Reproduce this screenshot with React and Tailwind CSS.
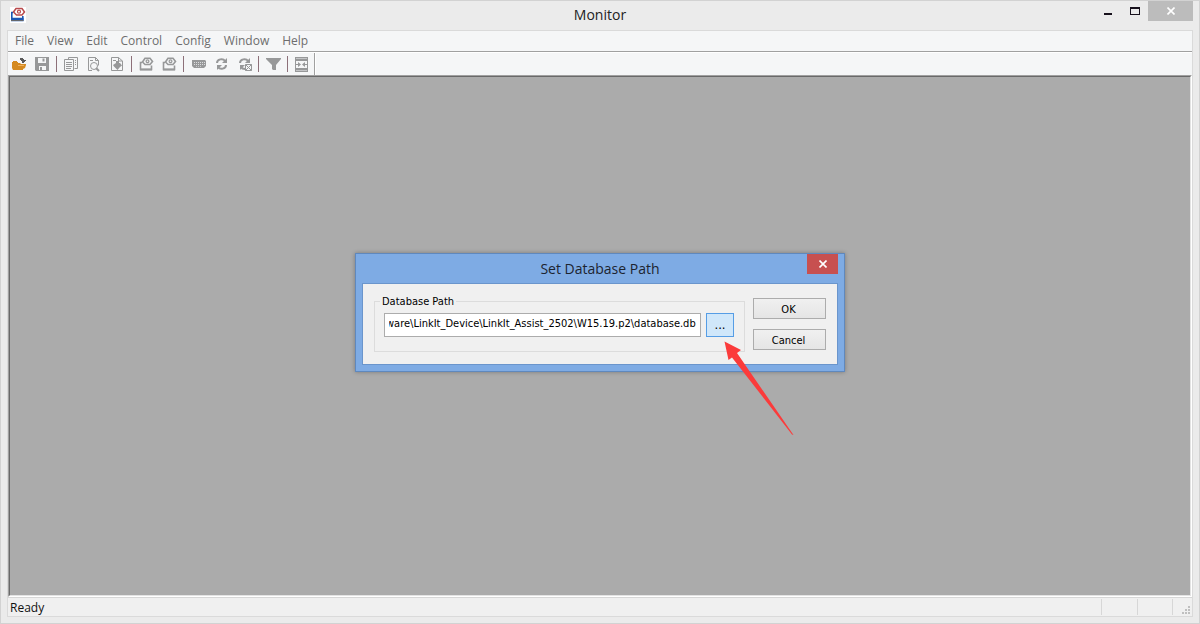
import { useEffect, useRef } from "react";

const menus = ["File", "View", "Edit", "Control", "Config", "Window", "Help"];

function Glyph({ children, fill = "none" }) {
  return (
    <svg viewBox="0 0 16 16" className="size-4 shrink-0" fill={fill} stroke="#979899" aria-hidden="true">
      {children}
    </svg>
  );
}

const OpenIcon = () => (
  <Glyph>
    <path d="M0 5h1v-1h4v1h1v1h2l1 1h5v1l-1 3-2 1v1H1l-1-2z" fill="#d58a20" stroke="none" />
    <path d="M6 8.500h6" stroke="#eeb060" />
    <path d="M8 1h3V2h1v1h2v1h-1v1h-1v1h-2V4H9V3H8z" fill="#5a5a5a" stroke="none" />
  </Glyph>
);

const SaveIcon = () => (
  <Glyph>
    <path fillRule="evenodd" d="M0 0h14v14H1l-1-1zM3 1v5h8V1zM4 9v4h1v-3h2v3h4V9z" fill="#979899" stroke="none" />
    <path d="M8.500 1.500v3" strokeWidth="2" />
  </Glyph>
);

const CopyIcon = () => (
  <Glyph>
    <path d="M4.500 2.500v-2h9v11h-3M0.500 2.500h9v11h-9zM2 5.500h6M2 7.500h6M2 9.500h6M2 11.500h5M6 0.500h5M11 3.500h1M11 5.500h1M11 7.500h1" />
  </Glyph>
);

const FindIcon = () => (
  <Glyph>
    <path d="M5 13.500H1.500V0.500h7l3 3v5M8.500 0.500v3h3M3 3.500h3" />
    <circle cx="7" cy="9" r="3.500" />
    <path d="M9 11l3 3" strokeWidth="2" />
  </Glyph>
);

const MarkIcon = () => (
  <Glyph>
    <path d="M1.500 0.500h7l4 3.500v9.500h-11zM8.500 0.500v3.500h4M3 3.500h3" />
    <path d="M6 4h3v2h1l2 2.500-2 1.500-2.500 3L4 9.500 3 8l3-2z" fill="#979899" stroke="none" />
  </Glyph>
);

const EyeIcon = () => (
  <Glyph>
    <path d="M3 5.500H1.500v7h11V8.500" strokeWidth="1.600" />
    <path d="M1 12.500h12" strokeWidth="2" />
    <path d="M3.500 5L6 1.200h5L13.500 4.500 11 7.500H6z" strokeWidth="1.600" />
    <circle cx="8.500" cy="4.300" r="1.400" strokeWidth="1.200" />
  </Glyph>
);

const KeyboardIcon = () => (
  <Glyph>
    <path d="M1 3h13l1 1v5l-2 2H3L1 9z" fill="#979899" stroke="none" />
    <path d="M3 5.500h11M3 7.500h11" stroke="#dcdddf" strokeDasharray="1 1" />
    <path d="M5 9.500h6" stroke="#c5c6c8" strokeDasharray="1 1" />
  </Glyph>
);

const CycleIcon = ({ crossed }) => (
  <Glyph>
    <path d="M3 6c0-4 6-5 8-2" strokeWidth="2" />
    <path d="M13 1v5H8z" fill="#979899" stroke="none" />
    <path d="M3 13V8h5z" fill="#979899" stroke="none" />
    {crossed ? (
      <>
        <path d="M4 10c1 2 2 2 4 2" strokeWidth="2" />
        <path d="M8.500 7.500h6v6h-6zM8.500 7.500l6 6M14.500 7.500l-6 6" />
      </>
    ) : (
      <path d="M4 10c2 3 8 2 8-2" strokeWidth="2" />
    )}
  </Glyph>
);

const FilterIcon = () => (
  <Glyph>
    <path d="M0 1h15v1l-5 6v5H7l-1-1V8L0 2z" fill="#979899" stroke="none" />
  </Glyph>
);

const SplitIcon = () => (
  <Glyph>
    <path fillRule="evenodd" d="M0 0h13v15H0zM1 4v7h11V4z" fill="#979899" stroke="none" />
    <path d="M1 1.500h11M1 13.500h11" stroke="#c4c5c7" />
    <path d="M1 7.500h2M10 7.500h2" />
    <path d="M3 5v5l3-2.500zM10 5v5L7 7.500z" fill="#979899" stroke="none" />
  </Glyph>
);

const toolGroups = [
  [["Open", <OpenIcon />], ["Save", <SaveIcon />]],
  [["Copy", <CopyIcon />], ["Find", <FindIcon />], ["Mark", <MarkIcon />]],
  [["Watch", <EyeIcon />], ["Watch all", <EyeIcon />]],
  [["Port", <KeyboardIcon />], ["Reconnect", <CycleIcon />], ["Disconnect", <CycleIcon crossed />]],
  [["Filter", <FilterIcon />]],
  [["Fit columns", <SplitIcon />]],
];

function AppIcon() {
  return (
    <svg viewBox="0 0 16 16" className="size-4 bg-white" fill="none" aria-hidden="true">
      <path d="M3 5.500H1.800v8h11V9" stroke="#1c57b5" strokeWidth="1.600" />
      <path d="M1 12h12.500" stroke="#1c57b5" strokeWidth="2.500" />
      <path d="M1 13.500h12.500" stroke="#66686c" />
      <path d="M3.500 5L6 1.500h6L14.500 5 12 8H6.500z" fill="#fff" stroke="#b94a4c" strokeWidth="1.500" />
      <circle cx="9" cy="4.700" r="1.500" stroke="#b94a4c" strokeWidth="1.200" />
    </svg>
  );
}

function TitleBar() {
  return (
    <header className="grid h-[29px] grid-cols-[1fr_auto_1fr] items-start">
      <div className="pt-1.5 pl-[3px]">
        <AppIcon />
      </div>
      <h1 className="pt-[3px] text-[14px] leading-[22px] text-[#222]">Monitor</h1>
      <div className="flex justify-end">
        <button aria-label="Minimize" className="flex h-5 w-[27px] items-center justify-center">
          <svg viewBox="0 0 10 10" className="size-2.5" aria-hidden="true">
            <path d="M1 7h8v2H1z" fill="#17111c" />
          </svg>
        </button>
        <button aria-label="Maximize" className="flex h-5 w-[27px] items-center justify-center">
          <svg viewBox="0 0 10 8" className="h-2 w-2.5" aria-hidden="true">
            <path fillRule="evenodd" d="M0 0h10v8H0zM1 2v5h8V2z" fill="#17111c" />
          </svg>
        </button>
        <button aria-label="Close" className="flex h-5 w-[45px] items-center justify-center bg-[#bcbcbc]">
          <svg viewBox="0 0 8 8" className="size-2" aria-hidden="true">
            <path d="M0.500 0.500l7 7M7.500 0.500l-7 7" stroke="#fff" strokeWidth="1.600" />
          </svg>
        </button>
      </div>
    </header>
  );
}

function Toolbar() {
  return (
    <div role="toolbar" className="flex h-[23px] items-stretch border-t border-white bg-[#f5f6f7]">
      {toolGroups.map((group, i) => (
        <div key={i} className="flex items-stretch">
          {i > 0 && (
            <span className="w-1.5 py-[3px] pl-0.5">
              <span className="block h-full w-px bg-[#8d7079]" />
            </span>
          )}
          {group.map(([label, icon]) => (
            <button key={label} aria-label={label} className="flex w-[23px] pt-1 pl-1">
              {icon}
            </button>
          ))}
        </div>
      ))}
      <span className="w-0.5 border-r border-l border-r-white border-l-[#a0a0a0]" />
    </div>
  );
}

function StatusBar() {
  return (
    <footer className="flex h-[19px] items-stretch border-t border-[#d7d7d7] bg-[#f0f0f0]">
      <span className="grow pl-0.5 text-xs leading-5 text-[#111]">Ready</span>
      <span className="my-px w-9 border-l border-[#d7d7d7]" />
      <span className="my-px w-[35px] border-l border-[#d7d7d7]" />
      <span className="my-px flex w-5 items-end justify-end border-l border-[#d7d7d7] pr-0.5">
        <svg viewBox="0 0 8 8" className="mb-px size-2" fill="#bfbfbf" aria-hidden="true">
          <path d="M6 0h2v2H6zM3 3h2v2H3zM6 3h2v2H6zM0 6h2v2H0zM3 6h2v2H3zM6 6h2v2H6z" />
        </svg>
      </span>
    </footer>
  );
}

const pushButton =
  "h-[21px] border border-[#acacac] bg-linear-to-b from-[#f0f0f0] to-[#e5e5e5] pt-0.5 pr-0.5 text-[11px] leading-none text-black";

function DatabaseDialog() {
  const pathRef = useRef(null);

  useEffect(() => {
    pathRef.current.scrollLeft = pathRef.current.scrollWidth;
  }, []);

  return (
    <section
      role="dialog"
      aria-labelledby="dialog-title"
      className="relative w-[490px] border border-[#5f88bd] bg-[#7eabe4] px-1.5 pb-1.5 shadow-[0_0_4px_rgba(0,0,0,0.3)]"
    >
      <div className="grid h-[29px] grid-cols-[1fr_auto_1fr] items-start">
        <h2 id="dialog-title" className="col-start-2 pt-1 text-[14px] leading-[22px] text-[#1c2430]">
          Set Database Path
        </h2>
        <button aria-label="Close dialog" className="flex h-5 w-[31px] items-center justify-center justify-self-end bg-[#c75050]">
          <svg viewBox="0 0 8 8" className="size-2" aria-hidden="true">
            <path d="M0.500 0.500l7 7M7.500 0.500l-7 7" stroke="#fff" strokeWidth="1.600" />
          </svg>
        </button>
      </div>
      <form
        onSubmit={(e) => e.preventDefault()}
        className="flex items-start gap-2 border border-[#6a95cc] bg-[#f0f0f0] px-[11px] pt-2.5 pb-3 font-['DejaVu_Sans_Condensed','DejaVu_Sans',sans-serif]"
      >
        <fieldset className="min-w-0 grow border border-[#dcdcdc] pr-2.5 pb-3.5 pl-[9px]">
          <legend className="-ml-1 px-0.5 text-[11px] leading-4 text-black">
            <label htmlFor="path">Database Path</label>
          </legend>
          <div className="flex gap-[5px] pt-[3px]">
            <input
              id="path"
              ref={pathRef}
              defaultValue={"ware\\LinkIt_Device\\LinkIt_Assist_2502\\W15.19.p2\\database.db"}
              className="h-6 min-w-0 grow border border-[#acacac] bg-white px-1 pb-0.5 text-[11px] text-black outline-none"
            />
            <button type="button" aria-label="Browse" className="h-6 w-7 border border-[#569de5] bg-[#d0e7fa] text-[13px] leading-5 text-black">
              ...
            </button>
          </div>
        </fieldset>
        <div className="mt-1 flex w-[73px] flex-col gap-2.5">
          <button type="submit" className={pushButton}>OK</button>
          <button type="button" className={pushButton}>Cancel</button>
        </div>
      </form>
      <svg viewBox="0 0 70 94" className="pointer-events-none absolute top-[87px] left-[368px] h-[94px] w-[70px]" aria-hidden="true">
        <path d="M0.500 0.500l16.500 8.500-4 3L69.500 94 68 93.500 8 16.500 4.500 19z" fill="#fb3b3b" />
      </svg>
    </section>
  );
}

export default function App() {
  return (
    <div className="relative flex min-h-screen flex-col border border-[#d2d2d2] bg-[#ebebeb] px-1.5 pb-1.5 font-['Open_Sans','Noto_Sans',sans-serif]">
      <TitleBar />
      <div className="flex grow flex-col border border-[#dadada] bg-[#f0f0f0]">
        <nav className="flex h-5 items-center gap-[13px] bg-[#f5f6f7] pl-[7px]">
          {menus.map((m) => (
            <button key={m} className="text-xs leading-5 text-[#6d6d6d]">
              {m}
            </button>
          ))}
        </nav>
        <div className="border-t border-[#a0a0a0]">
          <Toolbar />
        </div>
        <main className="flex grow flex-col border border-t-[#a0a0a0] border-r-white border-b-white border-l-[#a0a0a0]">
          <div className="grow border border-t-[#696969] border-r-[#e3e3e3] border-b-[#e3e3e3] border-l-[#696969] bg-[#ababab]" />
        </main>
        <StatusBar />
      </div>
      <div className="pointer-events-none absolute inset-0 grid place-items-center">
        <div className="pointer-events-auto">
          <DatabaseDialog />
        </div>
      </div>
    </div>
  );
}
